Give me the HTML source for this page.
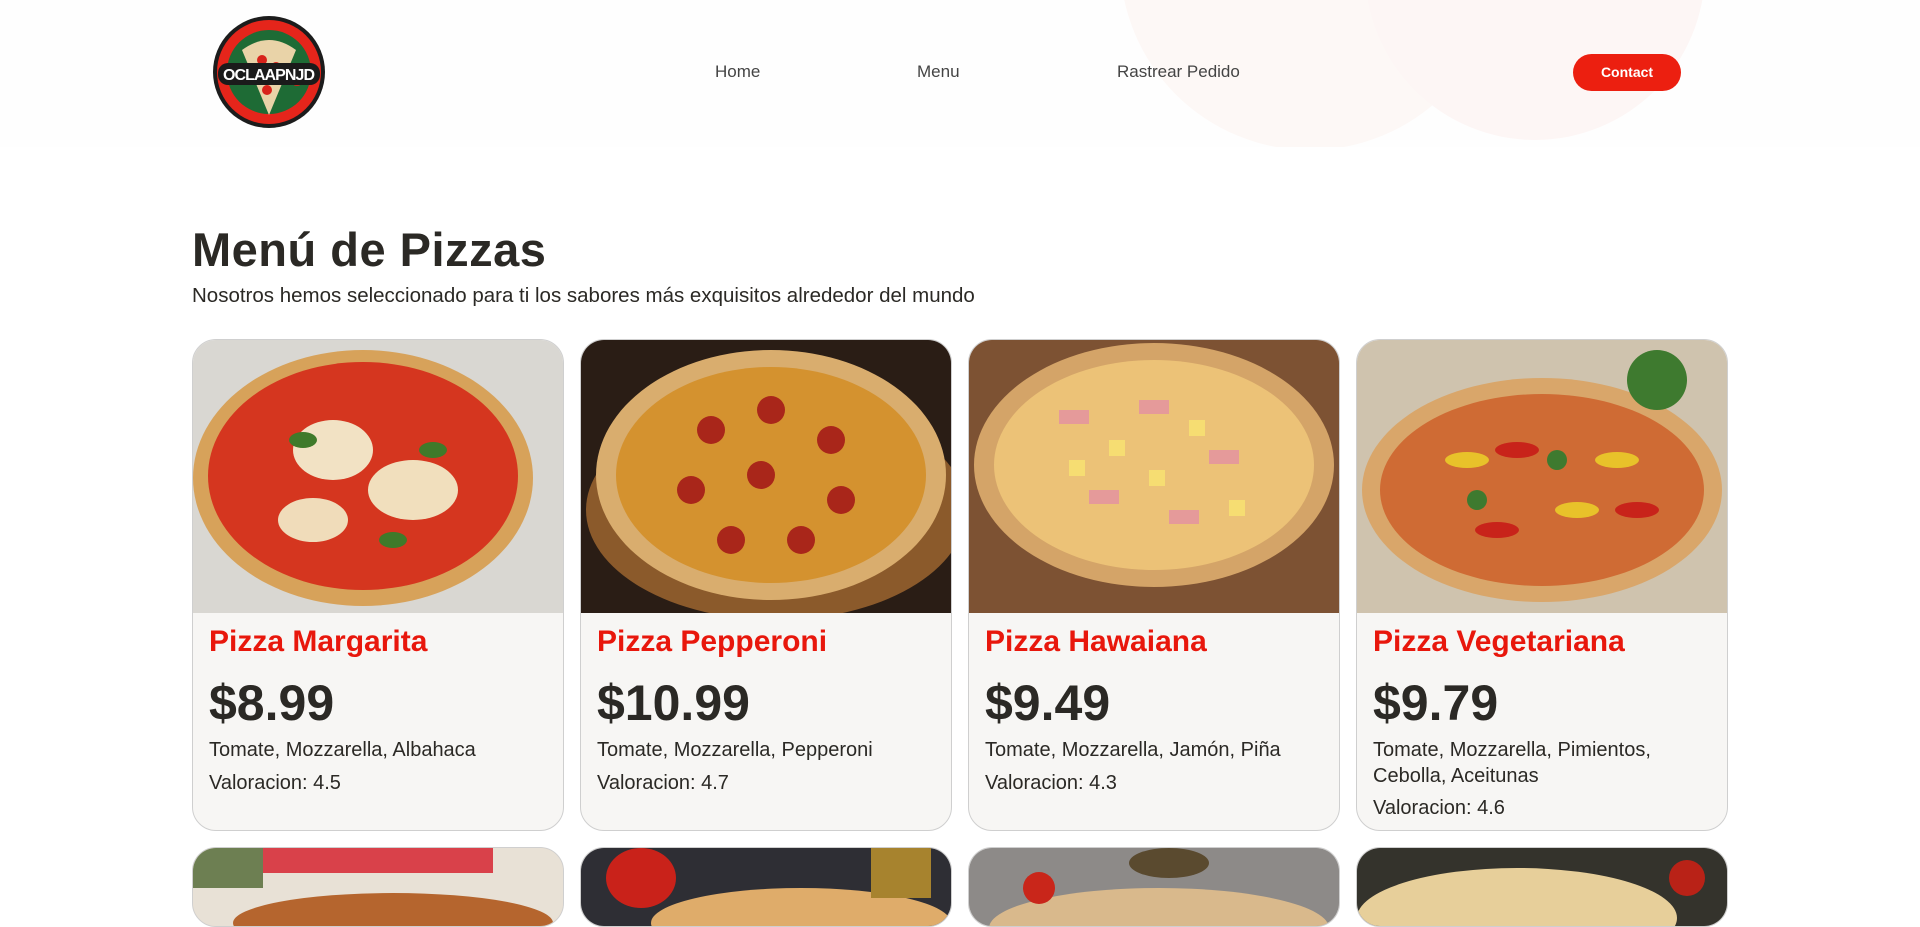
<!DOCTYPE html>
<html><head><meta charset="utf-8">
<style>
*{margin:0;padding:0;box-sizing:border-box}
body{width:1920px;height:911px;overflow:hidden;background:#fff;font-family:"Liberation Sans",sans-serif;color:#2b2925;position:relative}
.hdr{position:absolute;left:0;top:0;width:1920px;height:147px;background:#fefefe;overflow:hidden}
.nav{position:absolute;top:62px;font-size:17px;color:#444}
.btn{position:absolute;left:1573px;top:54px;width:108px;height:37px;border-radius:19px;background:#ec1f10;color:#fff;font-weight:bold;font-size:14px;text-align:center;line-height:37px}
h1{position:absolute;left:192px;top:222px;font-size:47px;font-weight:bold;color:#2b2925;letter-spacing:0.5px}
.sub{position:absolute;left:192px;top:284px;font-size:20.5px;color:#2b2925}
.card{position:absolute;width:372px;height:492px;border:1px solid #cfcfcf;border-radius:24px;background:#f7f6f4;overflow:hidden}
.card svg{display:block}
.t{position:absolute;left:16px;top:285px;font-size:30px;font-weight:bold;color:#e8170c}
.p{position:absolute;left:16px;top:334px;font-size:50px;font-weight:bold;color:#2b2925}
.i{position:absolute;left:16px;top:397px;font-size:20px;line-height:26px;width:335px}
.r{position:absolute;left:16px;font-size:20px}
</style></head><body>
<div class="hdr">
<svg width="1920" height="147" style="position:absolute;left:0;top:0">
<circle cx="1310" cy="-40" r="190" fill="#fdf8f6"/>
<circle cx="1535" cy="-30" r="170" fill="#fdf6f5"/>
</svg>
<svg width="114" height="114" style="position:absolute;left:212px;top:15px" viewBox="0 0 114 114">
<circle cx="57" cy="57" r="56" fill="#1c1c1c"/>
<circle cx="57" cy="57" r="52" fill="#e5251b"/>
<circle cx="57" cy="57" r="42" fill="#1e6b35"/>
<path d="M30 35 Q57 15 84 35 L57 100 Z" fill="#e9d3a8"/>
<circle cx="50" cy="45" r="5" fill="#d8221a"/><circle cx="64" cy="52" r="5" fill="#d8221a"/><circle cx="55" cy="75" r="5" fill="#d8221a"/><circle cx="85" cy="65" r="6" fill="#d8221a"/>
<rect x="6" y="48" width="102" height="22" rx="10" fill="#1b1b1b"/>
<text x="57" y="65" font-family="Liberation Sans" font-weight="bold" font-size="16" fill="#fff" text-anchor="middle" textLength="92">OCLAAPNJD</text>
</svg>
<div class="nav" style="left:715px">Home</div>
<div class="nav" style="left:917px">Menu</div>
<div class="nav" style="left:1117px">Rastrear Pedido</div>
<div class="btn">Contact</div>
</div>
<h1>Menú de Pizzas</h1>
<div class="sub">Nosotros hemos seleccionado para ti los sabores más exquisitos alrededor del mundo</div>

<div class="card" style="left:192px;top:339px">
<svg width="372" height="273"><rect width="372" height="273" fill="#d9d7d2"/><ellipse cx="170" cy="138" rx="170" ry="128" fill="#d7a25a"/><ellipse cx="170" cy="136" rx="155" ry="114" fill="#d5361f"/><ellipse cx="140" cy="110" rx="40" ry="30" fill="#f2e2c4"/><ellipse cx="220" cy="150" rx="45" ry="30" fill="#f1dfbd"/><ellipse cx="120" cy="180" rx="35" ry="22" fill="#f0dcba"/><ellipse cx="110" cy="100" rx="14" ry="8" fill="#3f7a2a"/><ellipse cx="240" cy="110" rx="14" ry="8" fill="#3f7a2a"/><ellipse cx="200" cy="200" rx="14" ry="8" fill="#3f7a2a"/></svg>
<div class="t">Pizza Margarita</div><div class="p">$8.99</div>
<div class="i">Tomate, Mozzarella, Albahaca</div><div class="r" style="top:432px">Valoracion: 4.5</div></div>

<div class="card" style="left:580px;top:339px">
<svg width="372" height="273"><rect width="372" height="273" fill="#2a1d15"/><ellipse cx="195" cy="170" rx="190" ry="110" fill="#8b5a2b"/><ellipse cx="190" cy="135" rx="175" ry="125" fill="#d9ad6e"/><ellipse cx="190" cy="135" rx="155" ry="108" fill="#d4922f"/><g fill="#a9261a"><circle cx="130" cy="90" r="14"/><circle cx="190" cy="70" r="14"/><circle cx="250" cy="100" r="14"/><circle cx="110" cy="150" r="14"/><circle cx="180" cy="135" r="14"/><circle cx="260" cy="160" r="14"/><circle cx="150" cy="200" r="14"/><circle cx="220" cy="200" r="14"/></g></svg>
<div class="t">Pizza Pepperoni</div><div class="p">$10.99</div>
<div class="i">Tomate, Mozzarella, Pepperoni</div><div class="r" style="top:432px">Valoracion: 4.7</div></div>

<div class="card" style="left:968px;top:339px">
<svg width="372" height="273"><rect width="372" height="273" fill="#7d5233"/><ellipse cx="185" cy="125" rx="180" ry="122" fill="#d4a468"/><ellipse cx="185" cy="125" rx="160" ry="105" fill="#ecc277"/><g fill="#e59a9a"><rect x="90" y="70" width="30" height="14"/><rect x="170" y="60" width="30" height="14"/><rect x="240" y="110" width="30" height="14"/><rect x="120" y="150" width="30" height="14"/><rect x="200" y="170" width="30" height="14"/></g><g fill="#f6dd72"><rect x="140" y="100" width="16" height="16"/><rect x="220" y="80" width="16" height="16"/><rect x="100" y="120" width="16" height="16"/><rect x="180" y="130" width="16" height="16"/><rect x="260" y="160" width="16" height="16"/></g></svg>
<div class="t">Pizza Hawaiana</div><div class="p">$9.49</div>
<div class="i">Tomate, Mozzarella, Jamón, Piña</div><div class="r" style="top:432px">Valoracion: 4.3</div></div>

<div class="card" style="left:1356px;top:339px">
<svg width="372" height="273"><rect width="372" height="273" fill="#cfc3ae"/><ellipse cx="185" cy="150" rx="180" ry="112" fill="#d9a66a"/><ellipse cx="185" cy="150" rx="162" ry="96" fill="#cf6b34"/><g fill="#e8c22a"><ellipse cx="110" cy="120" rx="22" ry="8"/><ellipse cx="220" cy="170" rx="22" ry="8"/><ellipse cx="260" cy="120" rx="22" ry="8"/></g><g fill="#c8231a"><ellipse cx="160" cy="110" rx="22" ry="8"/><ellipse cx="140" cy="190" rx="22" ry="8"/><ellipse cx="280" cy="170" rx="22" ry="8"/></g><g fill="#3e7a2f"><circle cx="200" cy="120" r="10"/><circle cx="120" cy="160" r="10"/><circle cx="300" cy="40" r="30"/></g></svg>
<div class="t">Pizza Vegetariana</div><div class="p">$9.79</div>
<div class="i">Tomate, Mozzarella, Pimientos,<br>Cebolla, Aceitunas</div><div class="r" style="top:457px">Valoracion: 4.6</div></div>

<div class="card" style="left:192px;top:847px;height:80px;background:#e9d8c8"><svg width="372" height="80"><rect width="372" height="80" fill="#e8e1d6"/><rect x="40" y="0" width="260" height="25" fill="#d9414a"/><ellipse cx="200" cy="75" rx="160" ry="30" fill="#b5652e"/><rect x="0" y="0" width="70" height="40" fill="#6d7f52"/></svg></div>
<div class="card" style="left:580px;top:847px;height:80px"><svg width="372" height="80"><rect width="372" height="80" fill="#2e2e34"/><ellipse cx="60" cy="30" rx="35" ry="30" fill="#c9221a"/><ellipse cx="220" cy="75" rx="150" ry="35" fill="#dfac6a"/><rect x="290" y="0" width="60" height="50" fill="#a7832e"/></svg></div>
<div class="card" style="left:968px;top:847px;height:80px"><svg width="372" height="80"><rect width="372" height="80" fill="#8d8a88"/><ellipse cx="190" cy="80" rx="170" ry="40" fill="#d9b98c"/><circle cx="70" cy="40" r="16" fill="#c9261a"/><ellipse cx="200" cy="15" rx="40" ry="15" fill="#5a4a2f"/></svg></div>
<div class="card" style="left:1356px;top:847px;height:80px"><svg width="372" height="80"><rect width="372" height="80" fill="#34332c"/><ellipse cx="160" cy="70" rx="160" ry="50" fill="#e7cf9a"/><circle cx="330" cy="30" r="18" fill="#b92217"/></svg></div>
</body></html>
